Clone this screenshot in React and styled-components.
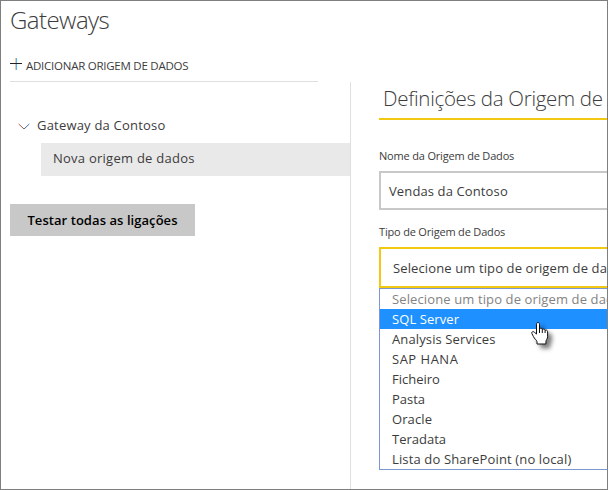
import React from "react";
import styled, { createGlobalStyle } from "styled-components";

const GlobalStyle = createGlobalStyle`
  *, *::before, *::after { box-sizing: border-box; }
  body { margin: 0; background: #fff; }
`;

const Page = styled.div`
  width: 608px;
  height: 490px;
  display: flex;
  flex-direction: column;
  position: relative;
  overflow: hidden;
  border: 1px solid #7f7f7f;
  background: #fff;
  color: #3c3c3c;
  font-family: "Open Sans", "Noto Sans", sans-serif;
  font-size: 13px;
  white-space: nowrap;
`;

const Header = styled.header`
  height: 81px;
  flex: none;
  padding-left: 9px;
`;

const Title = styled.h1`
  margin: 0;
  height: 52px;
  font-size: 24px;
  font-weight: 300;
  line-height: 37px;
  letter-spacing: -0.55px;
`;

const AddButton = styled.button`
  display: flex;
  align-items: center;
  width: 308px;
  height: 29px;
  padding: 0 0 2px;
  border: 0;
  border-bottom: 1px solid #dfdfdf;
  background: none;
  color: #3c3c3c;
  font: 400 11.5px/24px "Open Sans", sans-serif;
  letter-spacing: -0.25px;
  text-align: left;

  svg { flex: none; margin: 0 4px 4px 0; }
`;

const Columns = styled.div`
  flex: 1;
  display: flex;
  min-height: 0;
`;

const Sidebar = styled.nav`
  width: 350px;
  flex: none;
  border-right: 1px solid #dfdfdf;
`;

const TreeGroup = styled.div`
  display: flex;
  align-items: center;
  height: 61px;
  padding: 26px 0 1px 17px;
  gap: 7px;
  letter-spacing: 0.2px;

  svg { margin-top: 2px; }
`;

const TreeItem = styled.div`
  height: 33px;
  margin-left: 40px;
  padding-left: 12px;
  background: #e9e9e9;
  line-height: 31px;
  letter-spacing: 0.25px;
`;

const TestButton = styled.button`
  display: block;
  width: 185px;
  height: 32px;
  margin: 28px 0 0 9px;
  padding: 0;
  border: 0;
  background: #c8c8c8;
  color: #000;
  font: 600 13px/32px "Open Sans", sans-serif;
  letter-spacing: 0.06px;
`;

const Settings = styled.main`
  flex: 1;
  min-width: 0;
  padding-left: 28px;
  overflow: hidden;
`;

const SectionTitle = styled.h2`
  margin: 0;
  height: 38px;
  padding-left: 4px;
  border-bottom: 2px solid #f2c811;
  font-size: 20.5px;
  font-weight: 300;
  line-height: 32px;
  letter-spacing: -0.3px;
`;

const Label = styled.label`
  display: block;
  height: ${(p) => p.$height}px;
  padding-top: ${(p) => p.$top}px;
  font-size: 11px;
  line-height: 16px;
  letter-spacing: -0.18px;
`;

const Field = styled.div`
  width: 300px;
  height: ${(p) => (p.$active ? 41 : 39)}px;
  padding-left: ${(p) => (p.$active ? 12 : 8)}px;
  border: 2px solid ${(p) => (p.$active ? "#f2c811" : "#c8c8c8")};
  line-height: ${(p) => (p.$active ? 38 : 36)}px;
  letter-spacing: 0.12px;
`;

const Options = styled.ul`
  width: 300px;
  margin: 0;
  padding: 0;
  list-style: none;
  border: 1px solid #7b98d4;
`;

const Option = styled.li`
  height: 20px;
  padding-left: 12px;
  line-height: 20px;
  color: ${(p) => (p.$selected ? "#fff" : p.$muted ? "#838383" : "#3c3c3c")};
  background: ${(p) => (p.$selected ? "#1e90ff" : "#fff")};
  letter-spacing: ${(p) => p.$spacing}px;
`;

const Pointer = styled.svg`
  position: absolute;
  left: 530px;
  top: 320px;
  overflow: visible;
  filter: drop-shadow(4px 4px 2px rgba(0, 0, 0, 0.5));
`;

const options = [
  { name: "Selecione um tipo de origem de dados", muted: true, spacing: 0.12 },
  { name: "SQL Server", selected: true, spacing: 0.08 },
  { name: "Analysis Services", spacing: 0.12 },
  { name: "SAP HANA", spacing: 0.5 },
  { name: "Ficheiro", spacing: 0 },
  { name: "Pasta", spacing: 0 },
  { name: "Oracle", spacing: 0.1 },
  { name: "Teradata", spacing: 0 },
  { name: "Lista do SharePoint (no local)", spacing: 0.14 },
];

export default function App() {
  return (
    <>
      <GlobalStyle />
      <Page>
        <Header>
          <Title>Gateways</Title>
          <AddButton>
            <svg width="12" height="12" viewBox="0 0 12 12" shapeRendering="crispEdges">
              <path d="M5 0h1v12H5z" fill="#f0c8a0" />
              <path d="M6 0h1v12H6z" fill="#55b9f0" />
              <path d="M0 5h12v1H0z" fill="#222" />
            </svg>
            ADICIONAR ORIGEM DE DADOS
          </AddButton>
        </Header>
        <Columns>
          <Sidebar>
            <TreeGroup>
              <svg width="12" height="7" viewBox="0 0 12 7" fill="none">
                <path d="M.7 1 6 6" stroke="#a45c3c" />
                <path d="M6 6 11.3 1" stroke="#3e70a8" />
              </svg>
              <span>Gateway da Contoso</span>
            </TreeGroup>
            <TreeItem>Nova origem de dados</TreeItem>
            <TestButton>Testar todas as ligações</TestButton>
          </Sidebar>
          <Settings>
            <SectionTitle>Definições da Origem de</SectionTitle>
            <Label $height={51} $top={28}>Nome da Origem de Dados</Label>
            <Field>Vendas da Contoso</Field>
            <Label $height={37} $top={14}>Tipo de Origem de Dados</Label>
            <Field $active>Selecione um tipo de origem de dados</Field>
            <Options>
              {options.map((o) => (
                <Option key={o.name} $muted={o.muted} $selected={o.selected} $spacing={o.spacing}>
                  {o.name}
                </Option>
              ))}
            </Options>
          </Settings>
        </Columns>
        <Pointer width="18" height="24" viewBox="0 0 18 24">
          <path
            d="M5.5 13V3.2C5.5.9 8.5.9 8.5 3.2V8c.7-1.3 2.8-.9 2.8.5.8-1 2.8-.5 2.8 1 .9-.9 2.5-.3 2.5 1.2v5.1c0 2-1.7 3.2-1.7 5V23H6v-2.2c0-1.5-2.9-3.4-3.5-5.1L.9 12.5c-.6-1.6 1.2-2.6 2.4-1.3z"
            fill="#fff"
            stroke="#111"
            strokeLinejoin="round"
          />
          <path d="M8.5 8v4M11.3 8.5V12M14.1 9.5V12" stroke="#111" fill="none" />
        </Pointer>
      </Page>
    </>
  );
}
